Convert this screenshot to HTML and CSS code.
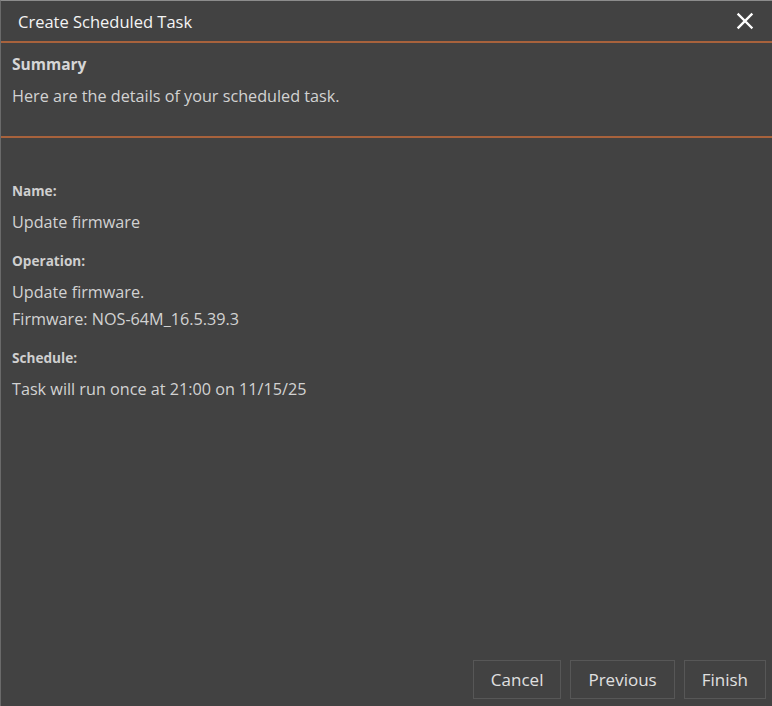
FILE: index.html
```html
<!DOCTYPE html>
<html>
<head>
<meta charset="utf-8">
<link rel="stylesheet" href="styles.css">
</head>
<body>
<div class="dialog">
  <div class="titlebar">
    <span class="title">Create Scheduled Task</span>
    <button class="close" aria-label="Close">
      <svg width="18" height="18" viewBox="0 0 18 18"><path d="M2.5 2.5 L15.5 15.5 M15.5 2.5 L2.5 15.5" stroke="#ffffff" stroke-width="2.4" stroke-linecap="square"/></svg>
    </button>
  </div>
  <div class="header">
    <div class="h-title">Summary</div>
    <div class="h-desc">Here are the details of your scheduled task.</div>
  </div>
  <div class="content">
    <div class="label">Name:</div>
    <div class="value">Update firmware</div>
    <div class="label">Operation:</div>
    <div class="value">Update firmware.<br>Firmware: NOS-64M_16.5.39.3</div>
    <div class="label">Schedule:</div>
    <div class="value">Task will run once at 21:00 on 11/15/25</div>
  </div>
  <div class="footer">
    <button class="btn">Cancel</button>
    <button class="btn">Previous</button>
    <button class="btn">Finish</button>
  </div>
</div>
</body>
</html>
```
FILE: styles.css
```css
html, body {
  margin: 0;
  padding: 0;
  background: #424242;
}
body {
  font-family: "Open Sans", "Noto Sans", sans-serif;
  color: #d2d2d2;
}
.dialog {
  width: 772px;
  height: 706px;
  box-sizing: border-box;
  border-top: 1px solid #8c8c8c;
  border-left: 1px solid #6a6a6a;
  background: #424242;
  display: flex;
  flex-direction: column;
}
.titlebar {
  height: 40px;
  display: flex;
  align-items: center;
  justify-content: space-between;
  padding: 0 18px 0 17px;
  border-bottom: 2px solid #a8623c;
}
.title {
  font-size: 16.5px;
  color: #f4f4f4;
}
.close {
  background: none;
  border: none;
  padding: 0;
  width: 18px;
  height: 18px;
  display: flex;
}
.header {
  height: 95px;
  box-sizing: border-box;
  padding: 11px 11px 0;
  border-bottom: 2px solid #a8623c;
}
.h-title {
  font-size: 15.5px;
  line-height: 20px;
  font-weight: 700;
  color: #d6d6d6;
}
.h-desc {
  margin-top: 11px;
  font-size: 16.2px;
  line-height: 22px;
  color: #d2d2d2;
}
.content {
  flex: 1;
  padding: 43px 11px 0;
}
.label {
  font-size: 13.6px;
  line-height: 20px;
  font-weight: 700;
  color: #cfcfcf;
  margin-bottom: 8px;
}
.value {
  font-size: 16.2px;
  line-height: 27px;
  color: #d2d2d2;
  margin-bottom: 15px;
}
.footer {
  display: flex;
  justify-content: flex-end;
  gap: 9px;
  padding: 0 6px 7px 0;
}
.btn {
  height: 39px;
  padding: 0 17px;
  background: #424242;
  border: 1px solid #575757;
  color: #e0e0e0;
  font-family: inherit;
  font-size: 17px;
}
```
